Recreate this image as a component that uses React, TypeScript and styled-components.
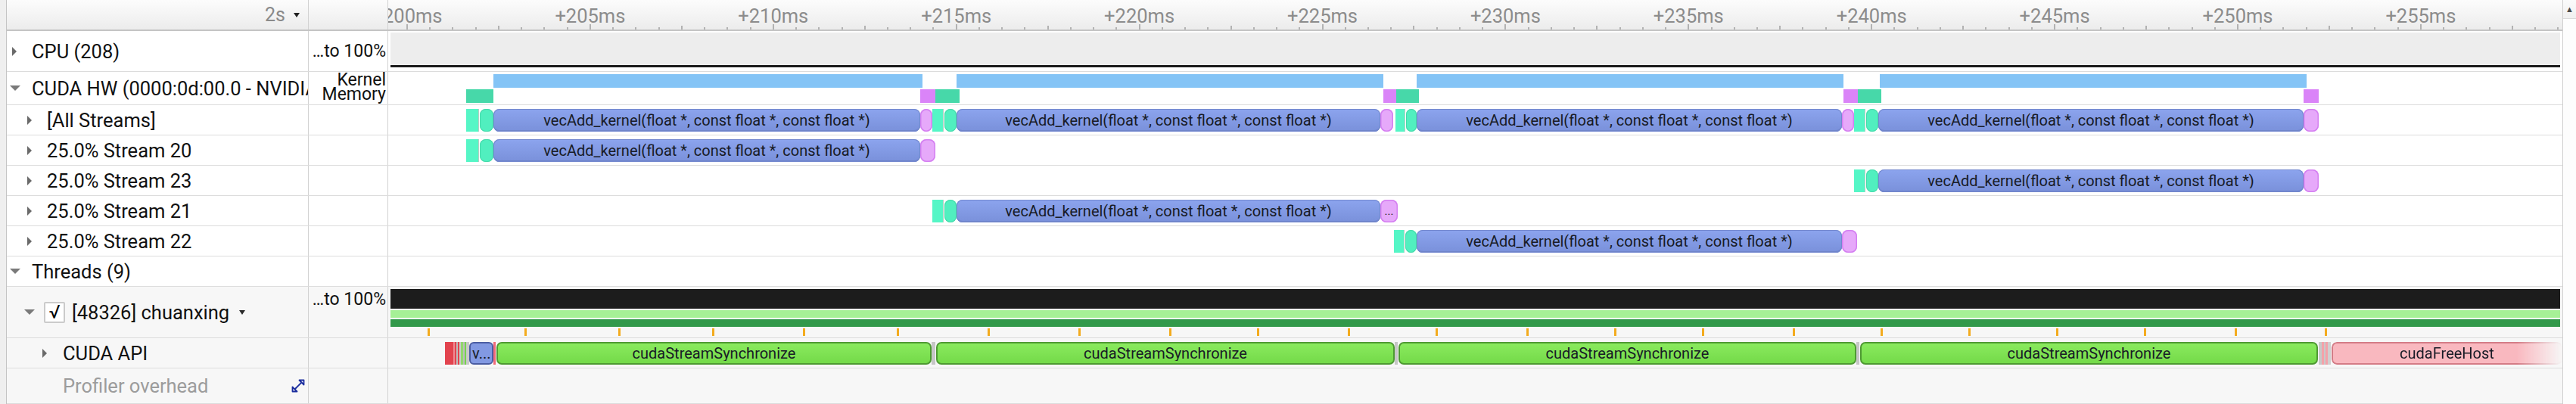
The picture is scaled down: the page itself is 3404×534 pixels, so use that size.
import React from 'react';
import styled, { createGlobalStyle, css } from 'styled-components';

const ORIGIN = 513;

const GlobalStyle = createGlobalStyle`
  html, body { margin: 0; padding: 0; background: #fff; }
  body { font-family: Roboto, "Liberation Sans", sans-serif; }
  * { box-sizing: border-box; }
`;

const Page = styled.div`
  display: flex;
  width: 3404px;
  height: 534px;
  overflow: hidden;
  background: #fff;
`;

const Gutter = styled.div`
  width: 9px;
  flex: none;
  background: #efefef;
  border-right: 1px solid #c4c4c4;
`;

const Main = styled.div`
  flex: 1;
  min-width: 0;
  display: flex;
  flex-direction: column;
`;

const Scrollbar = styled.div`
  width: 18px;
  flex: none;
  border-left: 1px solid #cfcfcf;
  background: #fdfdfd;
  display: flex;
  flex-direction: column;
`;

const ScrollUp = styled.div`
  height: 25px;
  display: flex;
  align-items: center;
  justify-content: center;
  font-size: 11px;
  color: #4a4a4a;
  border-bottom: 1px solid #dadada;
  background: linear-gradient(#fbfbfb, #f0f0f0);
`;

const Row = styled.div<{ $h?: number; $bg?: string }>`
  display: grid;
  grid-template-columns: 399px 105px 1fr;
  ${(p) => (p.$h ? `height: ${p.$h}px; flex: none;` : 'flex: 1;')}
  border-bottom: 1px solid #dcdcdc;
  background: ${(p) => p.$bg ?? '#fff'};
`;

const HeaderRow = styled.div`
  display: grid;
  grid-template-columns: 399px 105px 1fr;
  height: 41px;
  flex: none;
  border-bottom: 2px solid #c4c4c4;
  background: linear-gradient(#fcfcfc, #ececec);
`;

const HeaderName = styled.div`
  display: flex;
  align-items: center;
  justify-content: flex-end;
  gap: 11px;
  padding-right: 11px;
  border-right: 1px solid #d2d2d2;
  font-size: 25px;
  color: #8a8a8a;
`;

const SmallCaret = styled.span`
  width: 0;
  height: 0;
  border-top: 6px solid #222;
  border-left: 4.5px solid transparent;
  border-right: 4.5px solid transparent;
`;

const HeaderBlank = styled.div`
  border-right: 1px solid #d2d2d2;
`;

const Ruler = styled.div`
  position: relative;
  overflow: hidden;
`;

const RulerLabel = styled.span`
  position: absolute;
  top: 6px;
  transform: translateX(-50%);
  font-size: 25.5px;
  color: #8c8c8c;
  white-space: nowrap;
`;

const RulerTick = styled.span<{ $size: 'major' | 'mid' | 'minor' }>`
  position: absolute;
  bottom: 0;
  width: 2px;
  margin-left: -1px;
  background: #b2b2b2;
  height: ${(p) => (p.$size === 'major' ? 7 : p.$size === 'mid' ? 5 : 3)}px;
`;

const NameCell = styled.div<{ $indent: number; $muted?: boolean }>`
  display: flex;
  align-items: center;
  padding-left: ${(p) => p.$indent}px;
  border-right: 1px solid #d2d2d2;
  font-size: 25.5px;
  color: ${(p) => (p.$muted ? '#9c9c9c' : '#111')};
  white-space: nowrap;
  overflow: hidden;
`;

const Twisty = styled.span<{ $dir?: 'right' | 'down'; $m?: number }>`
  width: 30px;
  flex: none;
  display: flex;
  align-items: center;
  &::before {
    content: '';
    display: ${(p) => (p.$dir ? 'block' : 'none')};
    margin-left: ${(p) => p.$m ?? 0}px;
    width: 0;
    height: 0;
    ${(p) =>
      p.$dir === 'right'
        ? css`
            border-left: 6px solid #6a6a6a;
            border-top: 6px solid transparent;
            border-bottom: 6px solid transparent;
          `
        : css`
            border-top: 7px solid #7a7a7a;
            border-left: 7px solid transparent;
            border-right: 7px solid transparent;
          `}
  }
`;

const Checkbox = styled.span`
  width: 28px;
  height: 28px;
  flex: none;
  margin-right: 9px;
  border: 2px solid #cbcbcb;
  border-radius: 2px;
  background: #fff;
  display: flex;
  align-items: center;
  justify-content: center;
  font-size: 25px;
  color: #000;
`;

const MenuCaret = styled.span`
  margin-left: 13px;
  width: 0;
  height: 0;
  border-top: 6px solid #2a2a2a;
  border-left: 4.5px solid transparent;
  border-right: 4.5px solid transparent;
`;

const CornerIcon = styled.svg`
  margin-left: auto;
  margin-right: 3px;
  flex: none;
`;

const ValueCell = styled.div<{ $top?: boolean }>`
  display: flex;
  flex-direction: column;
  justify-content: ${(p) => (p.$top ? 'flex-start' : 'center')};
  align-items: flex-end;
  padding: ${(p) => (p.$top ? '3px' : '0')} 2px 0 0;
  border-right: 1px solid #d2d2d2;
  font-size: 23px;
  color: #111;
  white-space: nowrap;
  overflow: hidden;
`;

const LaneNames = styled.div`
  display: flex;
  flex-direction: column;
  align-items: flex-end;
  padding: 1px 2px 0 0;
  border-right: 1px solid #d2d2d2;
  font-size: 23px;
  line-height: 19px;
  color: #111;
`;

const Track = styled.div<{ $pt?: number; $gap?: number }>`
  position: relative;
  overflow: hidden;
  min-width: 0;
  display: flex;
  flex-direction: column;
  padding-top: ${(p) => p.$pt ?? 0}px;
  gap: ${(p) => p.$gap ?? 0}px;
`;

const Lane = styled.div<{ $h: number }>`
  position: relative;
  height: ${(p) => p.$h}px;
  flex: none;
`;

const CpuBox = styled.div`
  margin: 0 3px;
  height: 46px;
  background: #ededed;
  border-bottom: 3px solid #1b1b1b;
  flex: none;
`;

const Band = styled.div<{ $h: number; $color: string }>`
  margin: 0 3px;
  height: ${(p) => p.$h}px;
  background: ${(p) => p.$color};
  flex: none;
`;

const SyncTick = styled.span`
  position: absolute;
  top: 0;
  width: 3px;
  height: 10px;
  background: #f3ab1e;
`;

type Kind = 'kernel' | 'tealF' | 'tealR' | 'mag' | 'solid' | 'api' | 'apiBlue' | 'free';

interface Ev {
  x0: number;
  x1: number;
  kind: Kind;
  label?: string;
  color?: string;
}

const kindCss: Record<Kind, ReturnType<typeof css>> = {
  kernel: css`
    background: linear-gradient(#8ca4ee, #7990da);
    border-radius: 8px;
    box-shadow: inset 0 0 0 1px #7388cf, inset 0 -2px 0 #6f84c9;
  `,
  tealF: css`
    background: #55f6c6;
    box-shadow: inset -1px 0 0 #b9cbc3;
  `,
  tealR: css`
    background: #51efbf;
    border-radius: 8px;
    box-shadow: inset 0 0 0 1px #44d9a9;
  `,
  mag: css`
    background: #e6a9fa;
    border-radius: 8px;
    box-shadow: inset 0 0 0 1.5px #d47ff1;
  `,
  solid: css``,
  api: css`
    background: linear-gradient(#8aea5e, #74da49);
    border: 2px solid #4e9a32;
    border-radius: 7px;
  `,
  apiBlue: css`
    background: #8299e2;
    border: 2px solid #4b5da2;
    border-radius: 6px;
  `,
  free: css`
    background: #f9b8bf;
    border: 2px solid #d47c86;
    border-radius: 7px;
    -webkit-mask-image: linear-gradient(to right, #000 calc(100% - 60px), transparent);
    mask-image: linear-gradient(to right, #000 calc(100% - 60px), transparent);
  `,
};

const Bar = styled.div<{ $kind: Kind; $color?: string }>`
  position: absolute;
  top: 0;
  bottom: 0;
  display: flex;
  align-items: center;
  justify-content: center;
  overflow: hidden;
  white-space: nowrap;
  font-size: 20px;
  color: #181b26;
  background: ${(p) => p.$color ?? 'transparent'};
  ${(p) => kindCss[p.$kind]}
`;

const BarLabel = styled.span<{ $small?: boolean }>`
  overflow: hidden;
  text-overflow: clip;
  padding: 0 2px;
  font-size: ${(p) => (p.$small ? 15 : 20)}px;
  line-height: 1;
`;

const Events = ({ items }: { items: Ev[] }) => (
  <>
    {items.map((e, i) => (
      <Bar
        key={i}
        $kind={e.kind}
        $color={e.color}
        style={{ left: e.x0 - ORIGIN, width: e.x1 - e.x0 }}
      >
        {e.label ? <BarLabel $small={e.label === '...'}>{e.label}</BarLabel> : null}
      </Bar>
    ))}
  </>
);

const KL = 'vecAdd_kernel(float *, const float *, const float *)';

const CYCLES = [
  { ks: 652, ke: 1216 },
  { ks: 1264, ke: 1824 },
  { ks: 1872, ke: 2434 },
  { ks: 2482, ke: 3044 },
];

const kernelLane: Ev[] = [
  { x0: 652, x1: 1219, kind: 'solid', color: '#84c4f6' },
  { x0: 1264, x1: 1828, kind: 'solid', color: '#84c4f6' },
  { x0: 1872, x1: 2436, kind: 'solid', color: '#84c4f6' },
  { x0: 2484, x1: 3048, kind: 'solid', color: '#84c4f6' },
];

const memLane: Ev[] = [
  { x0: 616, x1: 652, kind: 'solid', color: '#47d8a9' },
  { x0: 1216, x1: 1236, kind: 'solid', color: '#da84f8' },
  { x0: 1236, x1: 1268, kind: 'solid', color: '#47d8a9' },
  { x0: 1828, x1: 1845, kind: 'solid', color: '#da84f8' },
  { x0: 1845, x1: 1875, kind: 'solid', color: '#47d8a9' },
  { x0: 2436, x1: 2455, kind: 'solid', color: '#da84f8' },
  { x0: 2455, x1: 2486, kind: 'solid', color: '#47d8a9' },
  { x0: 3044, x1: 3064, kind: 'solid', color: '#da84f8' },
];

const streamCycle = (ks: number, ke: number, magW: number, tealW: number, magLabel?: string): Ev[] => [
  { x0: ks - 2 * tealW, x1: ks - tealW - 1, kind: 'tealF' },
  { x0: ks - tealW, x1: ks, kind: 'tealR' },
  { x0: ks, x1: ke, kind: 'kernel', label: KL },
  { x0: ke, x1: ke + magW, kind: 'mag', label: magLabel },
];

const allStreams: Ev[] = [
  ...streamCycle(652, 1216, 16, 18),
  ...streamCycle(1264, 1824, 17, 16),
  ...streamCycle(1872, 2434, 16, 14),
  ...streamCycle(2482, 3044, 20, 16),
];

const stream20 = streamCycle(CYCLES[0].ks, CYCLES[0].ke, 20, 18);
const stream23 = streamCycle(CYCLES[3].ks, CYCLES[3].ke, 20, 16);
const stream21 = streamCycle(CYCLES[1].ks, CYCLES[1].ke, 23, 16, '...');
const stream22 = streamCycle(CYCLES[2].ks, CYCLES[2].ke, 20, 15);

const apiEvents: Ev[] = [
  { x0: 588, x1: 599, kind: 'solid', color: '#e2434e' },
  { x0: 599, x1: 601, kind: 'solid', color: '#ef8a92' },
  { x0: 601, x1: 603, kind: 'solid', color: '#e2434e' },
  { x0: 603, x1: 605, kind: 'solid', color: '#bdbdbd' },
  { x0: 605, x1: 607, kind: 'solid', color: '#e2434e' },
  { x0: 607, x1: 609, kind: 'solid', color: '#cccccc' },
  { x0: 609, x1: 612, kind: 'solid', color: '#91d86c' },
  { x0: 612, x1: 614, kind: 'solid', color: '#bdbdbd' },
  { x0: 614, x1: 616, kind: 'solid', color: '#76d24f' },
  { x0: 616, x1: 620, kind: 'solid', color: '#c9c9c9' },
  { x0: 620, x1: 652, kind: 'apiBlue', label: 'v...' },
  { x0: 652, x1: 655, kind: 'solid', color: '#f06a78' },
  { x0: 656, x1: 1231, kind: 'api', label: 'cudaStreamSynchronize' },
  { x0: 1231, x1: 1236, kind: 'solid', color: '#c6c6c6' },
  { x0: 1237, x1: 1843, kind: 'api', label: 'cudaStreamSynchronize' },
  { x0: 1843, x1: 1847, kind: 'solid', color: '#c6c6c6' },
  { x0: 1848, x1: 2453, kind: 'api', label: 'cudaStreamSynchronize' },
  { x0: 2453, x1: 2457, kind: 'solid', color: '#c6c6c6' },
  { x0: 2458, x1: 3063, kind: 'api', label: 'cudaStreamSynchronize' },
  { x0: 3064, x1: 3068, kind: 'solid', color: '#c9c9c9' },
  { x0: 3068, x1: 3071, kind: 'solid', color: '#f3a2aa' },
  { x0: 3071, x1: 3073, kind: 'solid', color: '#c9c9c9' },
  { x0: 3073, x1: 3076, kind: 'solid', color: '#f3a2aa' },
  { x0: 3076, x1: 3080, kind: 'solid', color: '#d0d0d0' },
  { x0: 3081, x1: 3386, kind: 'free', label: 'cudaFreeHost' },
];

const syncTicks = [
  566, 694, 818, 942, 1062, 1186, 1306, 1426, 1546, 1662, 1782, 1898, 2018, 2134, 2250, 2370,
  2486, 2602, 2718, 2834, 2954, 3073,
];

const T0 = 538;
const PX_PER_5MS = 241.9;
const rulerLabels = Array.from({ length: 12 }, (_, j) => ({
  x: T0 + j * PX_PER_5MS - ORIGIN,
  text: `+${200 + 5 * j}ms`,
}));
const rulerTicks: { x: number; size: 'major' | 'mid' | 'minor' }[] = [];
for (let i = 0; ; i++) {
  const x = T0 + (i * PX_PER_5MS) / 8;
  if (x > 3385) break;
  rulerTicks.push({ x: x - ORIGIN, size: i % 8 === 0 ? 'major' : i % 4 === 0 ? 'mid' : 'minor' });
}

const StreamRow = ({ name, items }: { name: string; items: Ev[] }) => (
  <Row $h={40}>
    <NameCell $indent={23}>
      <Twisty $dir="right" $m={4} />
      {name}
    </NameCell>
    <ValueCell />
    <Track $pt={5}>
      <Lane $h={30}>
        <Events items={items} />
      </Lane>
    </Track>
  </Row>
);

export default function App() {
  return (
    <>
      <GlobalStyle />
      <Page>
        <Gutter />
        <Main>
          <HeaderRow>
            <HeaderName>
              <span>2s</span>
              <SmallCaret />
            </HeaderName>
            <HeaderBlank />
            <Ruler>
              {rulerTicks.map((t, i) => (
                <RulerTick key={i} $size={t.size} style={{ left: t.x }} />
              ))}
              {rulerLabels.map((l) => (
                <RulerLabel key={l.text} style={{ left: l.x }}>
                  {l.text}
                </RulerLabel>
              ))}
            </Ruler>
          </HeaderRow>

          <Row $h={54}>
            <NameCell $indent={3}>
              <Twisty $dir="right" $m={4} />
              CPU (208)
            </NameCell>
            <ValueCell>…to 100%</ValueCell>
            <Track $pt={2}>
              <CpuBox />
            </Track>
          </Row>

          <Row $h={44}>
            <NameCell $indent={3}>
              <Twisty $dir="down" $m={1} />
              CUDA HW (0000:0d:00.0 - NVIDIA A100-SXM4-80GB)
            </NameCell>
            <LaneNames>
              <span>Kernel</span>
              <span>Memory</span>
            </LaneNames>
            <Track $pt={3} $gap={2}>
              <Lane $h={18}>
                <Events items={kernelLane} />
              </Lane>
              <Lane $h={18}>
                <Events items={memLane} />
              </Lane>
            </Track>
          </Row>

          <StreamRow name="[All Streams]" items={allStreams} />
          <StreamRow name="25.0% Stream 20" items={stream20} />
          <StreamRow name="25.0% Stream 23" items={stream23} />
          <StreamRow name="25.0% Stream 21" items={stream21} />
          <StreamRow name="25.0% Stream 22" items={stream22} />

          <Row $h={40}>
            <NameCell $indent={3}>
              <Twisty $dir="down" $m={1} />
              Threads (9)
            </NameCell>
            <ValueCell />
            <Track />
          </Row>

          <Row $h={68} $bg="#f7f7f7">
            <NameCell $indent={19}>
              <Twisty $dir="down" $m={4} />
              <Checkbox>√</Checkbox>
              [48326] chuanxing
              <MenuCaret />
            </NameCell>
            <ValueCell $top>…to 100%</ValueCell>
            <Track $pt={3} $gap={2}>
              <Band $h={26} $color="#1c1c1c" />
              <Band $h={10} $color="#a6f096" />
              <Band $h={10} $color="#32994a" />
              <Lane $h={10}>
                {syncTicks.map((x) => (
                  <SyncTick key={x} style={{ left: x - ORIGIN - 1 }} />
                ))}
              </Lane>
            </Track>
          </Row>

          <Row $h={40} $bg="#f7f7f7">
            <NameCell $indent={44}>
              <Twisty $dir="right" $m={3} />
              CUDA API
            </NameCell>
            <ValueCell />
            <Track $pt={5}>
              <Lane $h={30}>
                <Events items={apiEvents} />
              </Lane>
            </Track>
          </Row>

          <Row $bg="#f7f7f7">
            <NameCell $indent={44} $muted>
              <Twisty />
              Profiler overhead
              <CornerIcon width="20" height="20" viewBox="0 0 20 20" fill="none" stroke="#1b2d9e" strokeWidth="1.8">
                <path d="M5.5 14.5 L14.5 5.5" />
                <path d="M11.5 2.5 H17.5 V8.5 Z" strokeLinejoin="round" />
                <path d="M2.5 11.5 V17.5 H8.5 Z" strokeLinejoin="round" />
              </CornerIcon>
            </NameCell>
            <ValueCell />
            <Track />
          </Row>
        </Main>
        <Scrollbar>
          <ScrollUp>▲</ScrollUp>
        </Scrollbar>
      </Page>
    </>
  );
}
